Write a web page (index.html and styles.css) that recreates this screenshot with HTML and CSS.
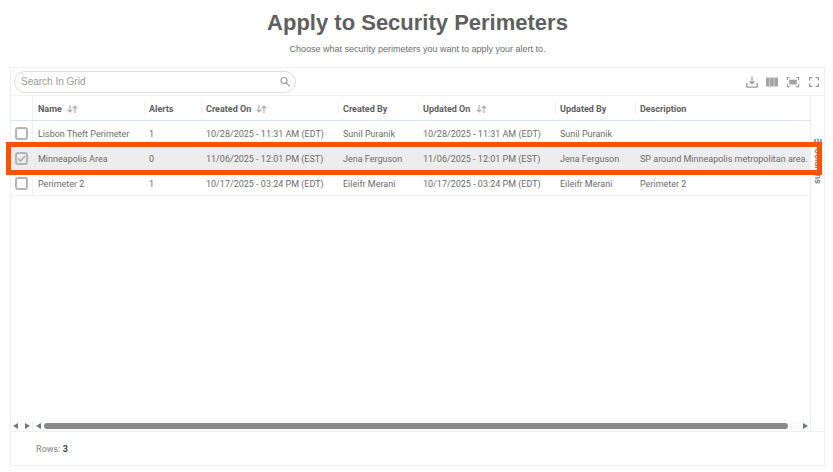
FILE: index.html
```
<!DOCTYPE html>
<html lang="en">

<head>
  <meta charset="utf-8">
  <meta name="viewport" content="width=device-width">
  <title>Apply to Security Perimeters</title>
  <link rel="stylesheet" href="styles.css">
</head>

<body>
  <header class="intro">
    <h1>Apply to Security Perimeters</h1>
    <p>Choose what security perimeters you want to apply your alert to.</p>
  </header>
  <main class="grid">
    <div class="toolbar">
      <div class="search">
        <input type="text" placeholder="Search In Grid" aria-label="Search In Grid">
        <svg viewBox="0 0 12 12" width="12" height="12"><circle cx="5" cy="4.5" r="3"/><path d="M7.2 6.8l3.6 3.6"/></svg>
      </div>
      <div class="tools">
        <button type="button" aria-label="Export">
          <svg viewBox="0 0 12 12" width="12" height="12"><path d="M6 0.5v7M3.5 5.2L6 7.7l2.5-2.5M0.8 7v4.2h10.4V7"/></svg>
        </button>
        <button type="button" aria-label="Columns">
          <svg viewBox="0 0 12 12" width="12" height="12"><path class="solid" d="M0 1.5h3.6v9H0zM4.1 1.5h3.7v9H4.1zM8.3 1.5H12v9H8.3z"/></svg>
        </button>
        <button type="button" aria-label="Fit columns">
          <svg viewBox="0 0 14 12" width="14" height="12"><path class="solid" d="M3.2 3.7h7.6v4.8H3.2z"/><path d="M1.4 4V1.5h2.3M10.3 1.5h2.3V4M12.6 8.2v2.5h-2.3M3.7 10.7H1.4V8.2"/></svg>
        </button>
        <button type="button" aria-label="Full screen">
          <svg viewBox="0 0 12 12" width="12" height="12"><path d="M1.6 4.4V1.6h2.8M7.6 1.6h2.8v2.8M10.4 7.6v2.8H7.6M4.4 10.4H1.6V7.6"/></svg>
        </button>
      </div>
    </div>
    <div class="content">
      <div class="data">
        <table>
          <colgroup>
            <col class="c-check">
            <col class="c-name">
            <col class="c-alerts">
            <col class="c-date">
            <col class="c-user">
            <col class="c-date">
            <col class="c-user">
            <col>
          </colgroup>
          <thead>
            <tr>
              <th></th>
              <th>Name <svg class="sort" viewBox="0 0 11 8" width="11" height="8"><path d="M3 0v7M0.6 4.6L3 7l2.4-2.4M8 8V1M5.6 3.4L8 1l2.4 2.4"/></svg></th>
              <th>Alerts</th>
              <th>Created On <svg class="sort" viewBox="0 0 11 8" width="11" height="8"><path d="M3 0v7M0.6 4.6L3 7l2.4-2.4M8 8V1M5.6 3.4L8 1l2.4 2.4"/></svg></th>
              <th>Created By</th>
              <th>Updated On <svg class="sort" viewBox="0 0 11 8" width="11" height="8"><path d="M3 0v7M0.6 4.6L3 7l2.4-2.4M8 8V1M5.6 3.4L8 1l2.4 2.4"/></svg></th>
              <th>Updated By</th>
              <th>Description</th>
            </tr>
          </thead>
          <tbody>
            <tr>
              <td><input type="checkbox" aria-label="Lisbon Theft Perimeter"></td>
              <td>Lisbon Theft Perimeter</td>
              <td>1</td>
              <td>10/28/2025 - 11:31 AM (EDT)</td>
              <td>Sunil Puranik</td>
              <td>10/28/2025 - 11:31 AM (EDT)</td>
              <td>Sunil Puranik</td>
              <td></td>
            </tr>
            <tr class="selected">
              <td><input type="checkbox" aria-label="Minneapolis Area" checked></td>
              <td>Minneapolis Area</td>
              <td>0</td>
              <td>11/06/2025 - 12:01 PM (EST)</td>
              <td>Jena Ferguson</td>
              <td>11/06/2025 - 12:01 PM (EST)</td>
              <td>Jena Ferguson</td>
              <td>SP around Minneapolis metropolitan area.</td>
            </tr>
            <tr>
              <td><input type="checkbox" aria-label="Perimeter 2"></td>
              <td>Perimeter 2</td>
              <td>1</td>
              <td>10/17/2025 - 03:24 PM (EDT)</td>
              <td>Eileifr Merani</td>
              <td>10/17/2025 - 03:24 PM (EDT)</td>
              <td>Eileifr Merani</td>
              <td>Perimeter 2</td>
            </tr>
          </tbody>
        </table>
        <div class="scroll">
          <div class="scroll-pinned"><i class="arrow left"></i><i class="arrow right"></i></div>
          <div class="scroll-main"><i class="arrow left"></i><div class="thumb"></div><i class="arrow right"></i></div>
        </div>
      </div>
      <aside class="side">
        <button type="button">
          <svg viewBox="0 0 8 8" width="8" height="8"><path class="solid" d="M0 0h2v8H0zM3 0h2v8H3zM6 0h2v8H6z"/></svg>
          <span>Columns</span>
        </button>
      </aside>
    </div>
    <footer class="status">Rows: <b>3</b></footer>
  </main>
</body>

</html>
```

FILE: styles.css
```
* {
  box-sizing: border-box;
}

body {
  margin: 0;
  padding: 0 8px 6px 10px;
  min-height: 100vh;
  display: flex;
  flex-direction: column;
  background: #fff;
  color: #6c6c6c;
  font: 9px/12px Roboto, sans-serif;
}

button {
  padding: 0;
  border: 0;
  background: none;
  color: inherit;
  font: inherit;
  cursor: pointer;
}

svg {
  display: block;
  fill: none;
  stroke: #999;
  stroke-width: 1.2;
}

.solid {
  fill: #a3a3a3;
  stroke: none;
}

.intro {
  height: 67px;
  padding-top: 8px;
  text-align: center;
  font-family: "Liberation Sans", Arial, sans-serif;
}

h1 {
  margin: 0;
  font-size: 22px;
  line-height: 30px;
  color: #5e6060;
}

.intro p {
  margin: 5px 0 0;
}

.grid {
  flex: 1;
  display: flex;
  flex-direction: column;
  border: 1px solid #edf0f2;
}

.toolbar {
  display: flex;
  justify-content: space-between;
  align-items: center;
  height: 28px;
  padding: 0 4px 0 3px;
  border-bottom: 1px solid #edf0f2;
}

.search {
  display: flex;
  align-items: center;
  width: 282px;
  height: 22px;
  padding: 0 4px 0 6px;
  border: 1px solid #ddd;
  border-radius: 11px;
}

.search input {
  flex: 1;
  min-width: 0;
  padding: 0;
  border: 0;
  outline: 0;
  background: none;
  color: #666;
  font: 10px "Liberation Sans", Arial, sans-serif;
}

.search input::placeholder {
  color: #999;
}

.tools {
  display: flex;
  gap: 8px;
}

.content {
  flex: 1;
  display: flex;
}

.data {
  flex: 1;
  min-width: 0;
  display: flex;
  flex-direction: column;
}

table {
  width: 100%;
  table-layout: fixed;
  border-collapse: separate;
  border-spacing: 0;
}

.c-check {
  width: 21px;
}

.c-name {
  width: 112px;
}

.c-alerts {
  width: 57px;
}

.c-date {
  width: 137px;
}

.c-user {
  width: 80px;
}

th,
td {
  height: 25px;
  padding: 1px 0 0 5px;
  text-align: left;
  white-space: nowrap;
  border-bottom: 1px solid #f0f2f3;
}

th {
  font-weight: 700;
  color: #606060;
  border-bottom-color: #dde5ea;
  background: linear-gradient(#eef0f1, #eef0f1) 0 50% / 1px 12px no-repeat;
}

th:first-child {
  background: none;
}

td:first-child {
  padding-left: 4px;
}

/* line between the pinned column and the rest */
th:nth-child(2),
td:nth-child(2) {
  border-left: 1px solid #edf0f5;
  background: none;
}

.sort {
  display: inline-block;
  margin-left: 3px;
  vertical-align: -1px;
  stroke: #b0b0b0;
}

td input {
  appearance: none;
  display: block;
  width: 13px;
  height: 13px;
  margin: 0;
  border: 2px solid #b5b5b5;
  border-radius: 3px;
}

td input:checked {
  background: url("data:image/svg+xml,%3Csvg xmlns='http://www.w3.org/2000/svg' viewBox='0 0 9 9'%3E%3Cpath d='M1 4.5l2.5 2.5L8.2 2' fill='none' stroke='%23aaa' stroke-width='1.3'/%3E%3C/svg%3E") center / 9px no-repeat;
}

.selected {
  position: relative;
  background: #ededed;
}

/* outline drawn from the first cell, but sized by the row */
.selected td:first-child::after {
  content: '';
  position: absolute;
  z-index: 1;
  top: -4px;
  bottom: -4px;
  left: -5px;
  right: -12px;
  border: 5px solid #ff5300;
  pointer-events: none;
}

.scroll {
  display: flex;
  margin-top: auto;
  height: 10px;
  background: #fbfbfb;
}

.scroll-pinned,
.scroll-main {
  display: flex;
  align-items: center;
  justify-content: space-between;
}

.scroll-pinned {
  width: 22px;
  padding: 0 2px;
  border-right: 1px solid #edf0f2;
}

.scroll-main {
  flex: 1;
  padding: 0 2px 0 3px;
}

.arrow {
  border: 3px solid transparent;
}

.arrow.left {
  border-left: 0;
  border-right: 5px solid #777;
}

.arrow.right {
  border-right: 0;
  border-left: 5px solid #777;
}

.thumb {
  flex: 1;
  height: 6px;
  margin: 0 15px 0 3px;
  border-radius: 3px;
  background: #8a8a8a;
}

.side {
  width: 14px;
  padding-top: 43px;
  border-left: 1px solid #edf0f5;
}

.side button {
  display: flex;
  flex-direction: column;
  align-items: center;
  gap: 1px;
  width: 100%;
}

.side span {
  font-weight: 500;
  writing-mode: vertical-rl;
}

.status {
  height: 34px;
  padding: 1px 25px 0;
  border-top: 1px solid #edf0f2;
  line-height: 32px;
  font-weight: 500;
  color: #999;
}

.status b {
  color: #444;
}
```
